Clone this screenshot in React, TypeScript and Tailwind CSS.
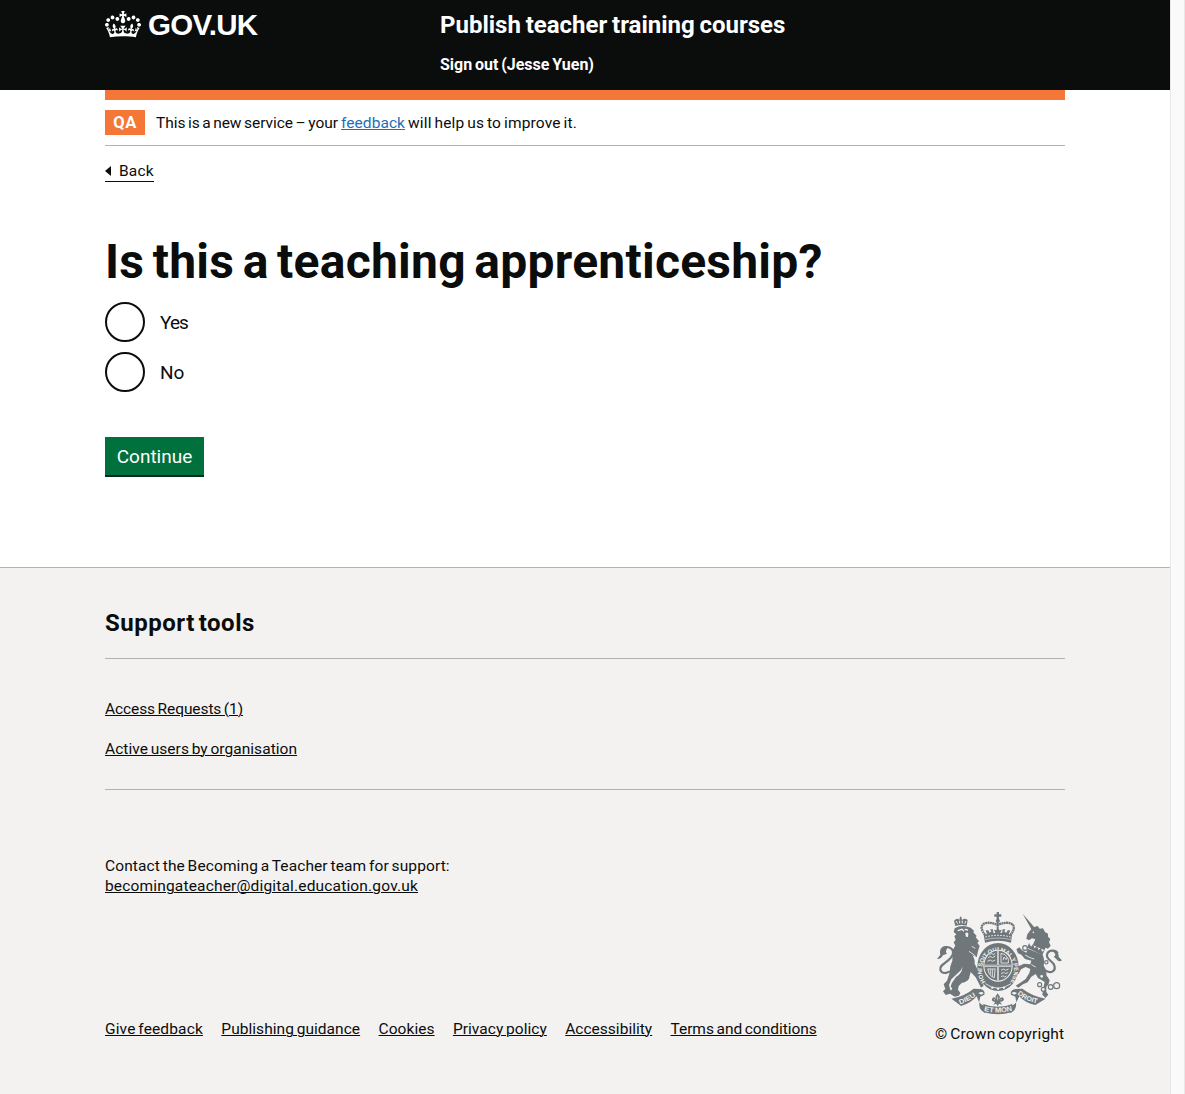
function CrownLogo() {
  return (
    <svg width="36" height="32" viewBox="0 0 132 97" fill="currentColor" preserveAspectRatio="xMidYMin" className="h-[27px] w-9" aria-hidden="true">
      <path
        fillRule="evenodd"
        d="M25 30.2c3.5 1.5 7.7-.2 9.1-3.7 1.5-3.6-.2-7.8-3.9-9.2-3.6-1.4-7.6.3-9.1 3.9-1.4 3.5.3 7.5 3.9 9zM9 39.5c3.6 1.5 7.8-.2 9.2-3.7 1.5-3.6-.2-7.8-3.9-9.1-3.6-1.5-7.6.2-9.1 3.8-1.4 3.5.3 7.5 3.8 9zM4.4 57.2c3.5 1.5 7.7-.2 9.1-3.8 1.5-3.6-.2-7.7-3.9-9.1-3.5-1.5-7.6.3-9.1 3.8-1.4 3.5.3 7.6 3.9 9.1zm38.3-21.4c3.5 1.5 7.7-.2 9.1-3.8 1.5-3.6-.2-7.7-3.9-9.1-3.6-1.5-7.6.3-9.1 3.8-1.3 3.6.4 7.7 3.9 9.1zm64.4-5.6c-3.6 1.5-7.8-.2-9.1-3.7-1.5-3.6.2-7.8 3.8-9.2 3.6-1.4 7.7.3 9.2 3.9 1.3 3.5-.4 7.5-3.9 9zm15.9 9.3c-3.6 1.5-7.7-.2-9.1-3.7-1.5-3.6.2-7.8 3.7-9.1 3.6-1.5 7.7.2 9.2 3.8 1.5 3.5-.3 7.5-3.8 9zm4.7 17.7c-3.6 1.5-7.8-.2-9.2-3.8-1.5-3.6.2-7.7 3.9-9.1 3.6-1.5 7.7.3 9.2 3.8 1.3 3.5-.4 7.6-3.9 9.1zM89.3 35.8c-3.6 1.5-7.8-.2-9.2-3.8-1.4-3.6.2-7.7 3.9-9.1 3.6-1.5 7.7.3 9.2 3.8 1.4 3.6-.3 7.7-3.9 9.1zM69.7 17.7l8.9 4.7V9.3l-8.9 2.8c-.2-.3-.5-.6-.9-.9L72.4 0H59.6l3.5 11.2c-.3.3-.6.5-.9.9l-8.8-2.8v13.1l8.8-4.7c.3.3.6.7.9.9l-5 15.4v.1c-.2.8-.4 1.6-.4 2.4 0 4.1 3.1 7.5 7 8.1h.2c.3 0 .7.1 1 .1.4 0 .7 0 1-.1h.2c4-.6 7.1-4.1 7.1-8.1 0-.8-.1-1.7-.4-2.4V34l-5.1-15.4c.4-.2.7-.6 1-.9zM66 92.8c16.9 0 32.8 1.1 47.1 3.2 4-16.9 8.9-26.7 14-33.5l-9.6-3.4c1 4.9 1.1 7.2 0 10.2-1.5-1.4-3-4.3-4.2-8.7L108.6 76c2.8-2 5-3.2 7.5-3.3-4.4 9.4-10 11.9-13.6 11.2-4.3-.8-6.3-4.6-5.6-7.9 1-4.7 5.7-5.9 8-.5 4.3-8.7-3-11.4-7.6-8.8 7.1-7.2 7.9-13.5 2.1-21.1-8 6.1-8.1 12.3-4.5 20.8-4.7-5.4-12.1-2.5-9.5 6.2 3.4-5.2 7.9-2 7.2 3.1-.6 4.3-6.4 7.8-13.5 7.2-10.3-.9-10.9-8-11.2-13.8 2.5-.5 7.1 1.8 11 7.3L80.2 60c-4.1 4.4-8 5.3-12.3 5.4 1.4-4.4 8-11.6 8-11.6H55.5s6.4 7.2 7.9 11.6c-4.2-.1-8-1-12.3-5.4l1.4 16.4c3.9-5.5 8.5-7.7 10.9-7.3-.3 5.8-.9 12.8-11.1 13.8-7.2.6-12.9-2.9-13.5-7.2-.7-5 3.8-8.3 7.1-3.1 2.7-8.7-4.6-11.6-9.4-6.2 3.7-8.5 3.6-14.7-4.6-20.8-5.8 7.6-5 13.9 2.2 21.1-4.7-2.6-11.9.1-7.7 8.8 2.3-5.5 7.1-4.2 8.1.5.7 3.3-1.3 7.1-5.7 7.9-3.5.7-9-1.8-13.5-11.2 2.5.1 4.7 1.3 7.5 3.3l-4.7-15.4c-1.2 4.4-2.7 7.2-4.3 8.7-1.1-3-.9-5.3 0-10.2l-9.5 3.4c5 6.9 9.9 16.7 14 33.5 14.8-2.1 30.8-3.2 47.7-3.2z"
      />
    </svg>
  );
}

function RoyalArms() {
  const ink = "#6f777b";
  const paper = "#f3f2f1";
  return (
    <svg viewBox="30 30 390 318" className="block h-[106px] w-[130px]" fill={ink} aria-hidden="true">
      {/* lion: crown, head and mane, body, legs, tail */}
      <path d="M91 78 L87 62 Q94 55 100 57 L103 60 L105 50 H109 L111 60 Q119 53 128 60 L125 77 Q108 72 91 78 Z" />
      <path d="M93 63 l5 8 M104 62 l0 8 M112 62 l0 8 M123 63 l-4 8" stroke={paper} strokeWidth="3" fill="none" />
      <path d="M89 85 Q106 75 127 80 L137 83 L147 92 L145 97 L155 108 L152 112 L162 124 L157 128 L164 138 L160 150 L155 172 L142 166 Q151 178 149 191 L158 209 L168 232 L176 257 L168 263 L161 249 L152 232 L137 216 L132 236 Q124 247 111 248 L101 258 L99 269 L106 279 L102 287 L89 290 L75 281 L62 285 L54 274 L61 267 L56 253 L66 242 L74 218 L76 199 L82 182 L83 150 L91 137 L86 127 L92 119 L88 109 L94 103 L86 96 Z" />
      <path d="M102 216 Q110 211 112 200 Q113 218 93 231 L81 248 L77 259 L82 266 L77 272 L72 255 L79 238 Z" fill={paper} />
      <path d="M98 92 L111 88 L117 94 M119 88 L129 90" stroke={paper} strokeWidth="4" fill="none" />
      <path d="M121 100 Q127 94 130 101 L129 110 Q124 113 122 108 Z" fill={paper} />
      <path d="M132 154 L148 165 L159 183 M140 139 L151 145" stroke={paper} strokeWidth="2.5" fill="none" />
      <path d="M88 203 C72 222 50 224 46 209 C41 191 81 184 84 160 C86 143 67 137 54 144" stroke={ink} strokeWidth="6.5" fill="none" />
      <path d="M63 139 C50 137 42 150 46 164 L36 177 Q48 178 54 166 L66 161 Q59 156 67 145 Z" />

      {/* unicorn: horn, head, collar, body, tail, chain */}
      <path d="M293 41 L330 84 L320 89 Z" />
      <path d="M325 82 L338 78 L344 86 L354 85 L360 96 L369 101 L369 110 L376 117 L372 127 L377 137 L369 146 L362 143 L358 151 L323 136 L331 118 L321 115 L312 121 L304 116 L307 103 L316 91 Z" />
      <circle cx="325" cy="97" r="2.5" fill={paper} />
      <path d="M315 132 L358 151 L354 162 L309 143 Z" fill={paper} />
      <path d="M312 129 L318 140 L324 133 L329 145 L336 138 L341 150 L348 143 L351 155 L359 150 L352 165 L307 143 Z" />
      <path d="M308 146 L353 164 Q360 180 356 197 Q366 208 364 225 L374 241 L370 254 L364 260 L364 276 L370 284 L361 294 L352 284 L355 264 L359 246 L339 234 L332 222 L319 230 L308 247 L294 253 L280 263 L272 257 L286 248 L302 237 L313 219 L316 207 L302 201 L288 208 L281 222 L274 220 L280 199 L297 191 L316 193 L319 182 L300 177 L289 164 L279 160 L274 148 L283 142 L291 151 L304 158 Z" />
      <circle cx="300" cy="144" r="7" fill={paper} stroke={ink} strokeWidth="3.5" />
      <path d="M300 165 L315 173 L328 177 M319 194 L332 201" stroke={paper} strokeWidth="2.5" fill="none" />
      <path d="M361 211 C378 222 391 214 389 200 C387 182 363 181 366 164 C369 149 391 148 398 160" stroke={ink} strokeWidth="6.5" fill="none" />
      <path d="M378 150 C395 150 402 160 401 171 L411 181 Q401 188 394 177 L386 170 Q395 166 388 158 Z" />
      <g fill={paper} stroke={ink} strokeWidth="3.5">
        <circle cx="364" cy="187" r="5" />
        <circle cx="350" cy="229" r="6" />
        <circle cx="344" cy="254" r="6" />
        <circle cx="355" cy="268" r="6" />
        <circle cx="377" cy="261" r="7" />
        <circle cx="395" cy="257" r="9" />
      </g>

      {/* garter with its lettering */}
      <ellipse cx="219" cy="201" rx="62" ry="72" />
      <ellipse cx="219" cy="197" rx="44" ry="48" fill={paper} />
      <path id="garter" d="M182 246 A48 56 0 1 1 256 246" fill="none" />
      <text fill={paper} fontFamily="Liberation Sans, sans-serif" fontWeight="700" fontSize="18">
        <textPath href="#garter" textLength="240" lengthAdjust="spacingAndGlyphs">
          HONI SOIT QUI MAL Y PENSE
        </textPath>
      </text>
      <path d="M181 251 Q219 278 258 251" stroke={paper} strokeWidth="2.5" fill="none" />
      <g fill={paper}>
        <circle cx="202" cy="263" r="3.5" />
        <circle cx="219" cy="266" r="3.5" />
        <circle cx="237" cy="263" r="3.5" />
      </g>

      {/* quartered shield */}
      <ellipse cx="219" cy="197" rx="41" ry="45" />
      <path d="M219 152 V242 M178 197 H260" stroke={paper} strokeWidth="6" />
      <path d="M219 152 V242 M178 197 H260" stroke={ink} strokeWidth="2" />
      <g stroke={paper} strokeWidth="2.5" fill="none">
        <path d="M189 174 l7 -5 6 4 9 -5 M187 184 l9 -4 6 4 9 -4 M194 164 l6 -4 5 4 6 -4" />
        <path d="M228 160 L240 164 L250 177 V189 H228 Z M234 181 L237 171 L243 179 L246 172" />
        <path d="M187 207 H212 M189 207 Q190 227 208 233 L210 208 M196 208 V223 M202 208 V229" />
        <path d="M228 211 l8 -4 6 4 9 -4 M228 221 l8 -4 6 4 8 -4 M228 231 l6 -4 5 4 5 -3" />
      </g>

      {/* crown above the garter */}
      <path d="M215 36 H222 V43 H229 V50 H222 V57 H215 V50 H208 V43 H215 Z" />
      <circle cx="218.5" cy="62" r="6" />
      <path d="M181 105 C154 75 180 58 218 75 C256 58 282 75 256 105" stroke={ink} strokeWidth="7" strokeDasharray="6 1.2" fill="none" />
      <path d="M218 66 V105" stroke={ink} strokeWidth="6" strokeDasharray="6 1.2" />
      <path d="M187 105 L182 91 H190 L194 98 L199 94 L195 88 H204 L205 99 H211 L207 89 L214 91 L218 82 L223 91 L230 89 L226 99 H231 L233 88 H241 L238 95 L244 98 L248 91 H256 L250 105 Z" />
      <path d="M176 104 Q219 94 261 104 L258 128 Q219 117 180 128 Z" />
      <path d="M181 111 Q219 101 257 111" stroke={paper} strokeWidth="3" strokeDasharray="5 4" fill="none" />
      <path d="M180 119 Q219 109 258 119" stroke={paper} strokeWidth="1.5" fill="none" />

      {/* motto ribbons */}
      <path d="M79 296 Q119 289 146 266 L166 267 Q182 270 178 284 L166 290 L162 307 Q171 316 183 318 L181 339 Q160 331 163 309 L155 289 Q138 310 108 318 Q94 306 79 296 Z" />
      <path d="M362 296 Q322 289 292 266 L272 267 Q254 270 258 284 L271 290 L274 307 Q267 316 252 318 L256 339 Q276 331 273 309 L283 289 Q301 310 331 315 Q347 305 362 296 Z" />
      <path d="M160 279 Q171 272 176 280 L168 284 Q166 282 160 279 Z M276 279 Q265 272 260 280 L268 284 Z" fill={paper} />
      <path d="M173 311 Q219 330 264 311 L260 337 Q219 349 176 337 Z" />
      <path d="M169 294 L169 312 L176 315 M267 294 L268 311 L261 315" stroke={paper} strokeWidth="2.5" fill="none" />
      <path id="motto-left" d="M105 313 Q135 303 157 284" fill="none" />
      <path id="motto-mid" d="M177 333 Q219 343 263 332" fill="none" />
      <path id="motto-right" d="M277 282 Q302 304 341 311" fill="none" />
      <g fill={paper} fontFamily="Liberation Sans, sans-serif" fontWeight="700">
        <text fontSize="20">
          <textPath href="#motto-left" textLength="54" lengthAdjust="spacingAndGlyphs">DIEU</textPath>
        </text>
        <text fontSize="21">
          <textPath href="#motto-mid" textLength="86" lengthAdjust="spacingAndGlyphs">ET MON</textPath>
        </text>
        <text fontSize="20">
          <textPath href="#motto-right" textLength="66" lengthAdjust="spacingAndGlyphs">DROIT</textPath>
        </text>
      </g>

      {/* fleur between the ribbons */}
      <path d="M218 280 L225 290 L222 298 Q233 286 237 298 Q236 307 225 305 L231 314 L222 311 L218 319 L214 311 L205 314 L211 305 Q200 307 201 297 Q205 286 215 298 L211 290 Z" />
      <path d="M218 289 V301 M207 299 L210 299 M227 299 L230 299" stroke={paper} strokeWidth="2" />
    </svg>
  );
}

const link = "underline decoration-1 underline-offset-[1px]";

const footerLinks = [
  { label: "Give feedback", box: "w-[98px] tracking-[0.14px]" },
  { label: "Publishing guidance", box: "w-[139px] tracking-[0.05px]" },
  { label: "Cookies", box: "w-14 tracking-[0.05px]" },
  { label: "Privacy policy", box: "w-[94px] tracking-[0.05px]" },
  { label: "Accessibility", box: "w-[87px] tracking-[0.02px]" },
  { label: "Terms and conditions", box: "w-[146px] tracking-[-0.03px]" },
];

function Radio({ label, className }: { label: string; className: string }) {
  return (
    <label className="flex h-10 items-center">
      <input type="radio" name="apprenticeship" className="size-10 appearance-none rounded-full border-2 border-[#0b0c0c] bg-white" />
      <span className={"ml-[15px] text-[19px] leading-[25px] " + className}>{label}</span>
    </label>
  );
}

export default function App() {
  return (
    <div className="flex h-[1094px] w-[1185px] overflow-hidden bg-white font-['Roboto',sans-serif] text-[15.5px] leading-5 whitespace-nowrap text-[#0b0c0c] [word-spacing:-1.2px]">
      <div className="flex w-[1170px] flex-col">
        <header className="h-[90px] bg-[#0b0c0c] text-white">
          <div className="mx-auto flex w-[960px]">
            <div className="flex w-[335px] gap-[7px] pt-[11px]">
              <CrownLogo />
              <span className="-mt-[3px] font-['Liberation_Sans',sans-serif] text-[29.5px] leading-[34px] font-bold tracking-[-0.7px]">GOV.UK</span>
            </div>
            <div className="font-bold">
              <div className="pt-[10px] text-2xl leading-[30px]">Publish teacher training courses</div>
              <div className="mt-[15px] text-base leading-5">Sign out (Jesse Yuen)</div>
            </div>
          </div>
        </header>

        <div className="mx-auto w-[960px]">
          <div className="h-2.5 bg-[#f47738]" />
          <div className="flex h-[46px] items-center border-b border-[#b1b4b6]">
            <strong className="flex h-[25px] w-10 items-center justify-center bg-[#f47738] text-[16.5px] tracking-[0.4px] text-white">QA</strong>
            <p className="ml-[11px] flex pt-px">
              <span className="w-[185px] tracking-[-0.05px]">This is a new service – your</span>
              <a href="#" className={"w-16 tracking-[0.06px] text-[#1d70b8] " + link}>feedback</a>
              <span className="ml-[3px] tracking-[0.18px]">will help us to improve it.</span>
            </p>
          </div>
          <a href="#" className="mt-[15px] flex h-[21px] w-[49px] items-center border-b border-[#0b0c0c] tracking-[0.2px]">
            <svg viewBox="0 0 6 10" className="mr-2 h-2.5 w-1.5">
              <path d="M0 5 L6 0 V10 Z" fill="#0b0c0c" />
            </svg>
            Back
          </a>
          <main>
            <h1 className="mt-[55px] text-5xl leading-[50px] font-bold tracking-[0.25px] [word-spacing:-3.7px]">Is this a teaching apprenticeship?</h1>
            <div className="mt-[15px] flex flex-col gap-2.5">
              <Radio label="Yes" className="tracking-[-0.9px]" />
              <Radio label="No" className="" />
            </div>
            <button className="mt-[45px] block h-10 w-[99px] border-b-2 border-[#002d18] bg-[#00703c] pt-px text-[19px] leading-[37px] text-white">Continue</button>
          </main>
        </div>

        <footer className="mt-[90px] flex-1 border-t border-[#b1b4b6] bg-[#f3f2f1]">
          <div className="mx-auto w-[960px]">
            <h2 className="h-[91px] border-b border-[#b1b4b6] pt-10 text-2xl leading-[30px] font-bold tracking-[0.5px] [word-spacing:-2.5px]">Support tools</h2>
            <div className="flex h-[131px] flex-col items-start gap-5 border-b border-[#b1b4b6] pt-10">
              <a href="#" className={"tracking-[-0.09px] " + link}>Access Requests (1)</a>
              <a href="#" className={"tracking-[0.05px] " + link}>Active users by organisation</a>
            </div>
            <p className="mt-[66px] tracking-[0.11px]">Contact the Becoming a Teacher team for support:</p>
            <a href="#" className={"tracking-[0.17px] " + link}>becomingateacher@digital.education.gov.uk</a>
            <div className="mt-[14px] flex h-[134px] items-end justify-between">
              <nav className="mb-[5px] flex gap-[18.3px]">
                {footerLinks.map((item) => (
                  <a key={item.label} href="#" className={link + " " + item.box}>{item.label}</a>
                ))}
              </nav>
              <div className="flex w-[130px] flex-col">
                <RoyalArms />
                <span className="mt-2 tracking-[0.2px]">© Crown copyright</span>
              </div>
            </div>
          </div>
        </footer>
      </div>
      <div className="w-[15px] border-x border-[#e8e8e8] bg-[#fafafa]" />
    </div>
  );
}
